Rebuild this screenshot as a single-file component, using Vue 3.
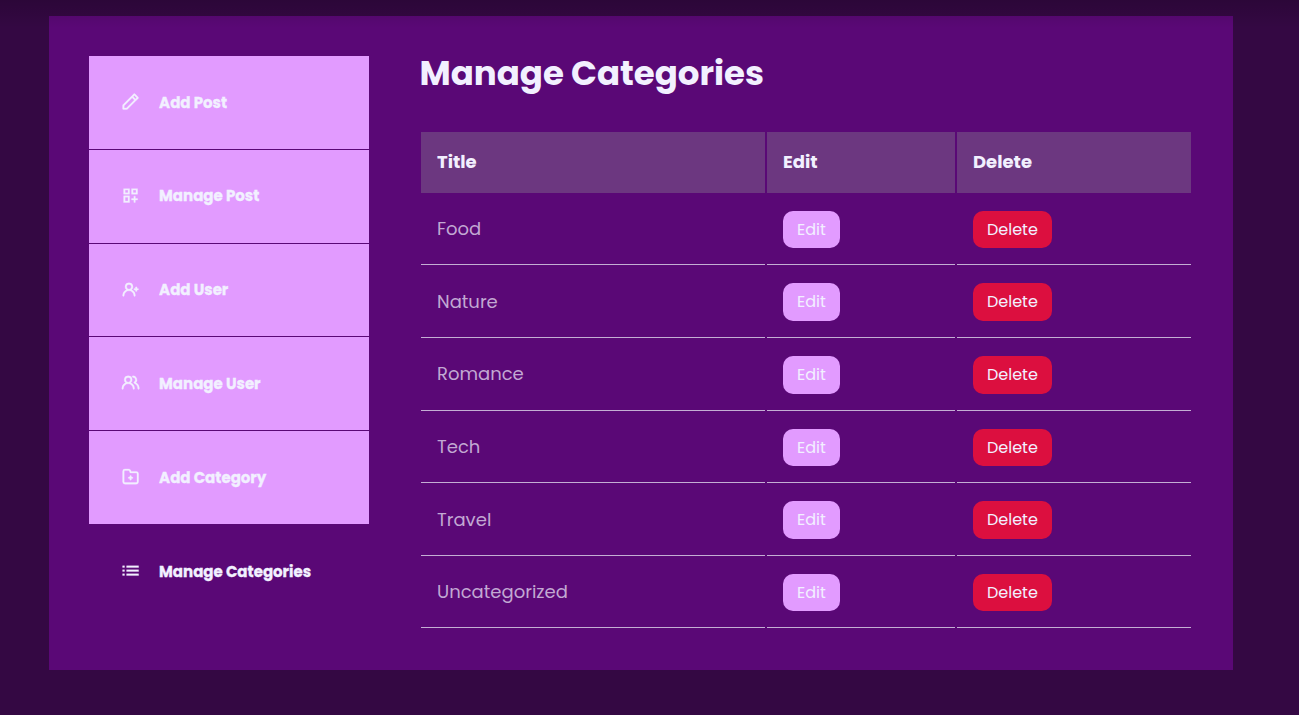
<script setup>
const menu = [
  { label: 'Add Post', icon: 'M22,7.24a1,1,0,0,0-.29-.71L17.47,2.29A1,1,0,0,0,16.76,2a1,1,0,0,0-.71.29L13.22,5.12h0L2.29,16.05a1,1,0,0,0-.29.71V21a1,1,0,0,0,1,1H7.24A1,1,0,0,0,8,21.71L18.87,10.78h0L21.71,8a1.19,1.19,0,0,0,.22-.33,1,1,0,0,0,0-.24.7.7,0,0,0,0-.14ZM6.83,20H4V17.17l9.93-9.93,2.83,2.83ZM18.17,8.66,15.34,5.83l1.42-1.41,2.82,2.82Z' },
  { label: 'Manage Post', icon: 'M3.25 3.3h7.5v7h-7.5zM5.2 5.1v3.4h3.6V5.1zM13.2 3.3h7.5v7h-7.5zM15.1 5.1v3.4h3.7V5.1zM3.25 12.2h7.5v8.5h-7.5zM5.2 14.1v4.7h3.6v-4.7zM16.1 12.7h1.8v3h2.8v1.8h-2.8v3h-1.8v-3h-2.9v-1.8h2.9z' },
  { label: 'Add User', icon: 'M21,10.5H20v-1a1,1,0,0,0-2,0v1H17a1,1,0,0,0,0,2h1v1a1,1,0,0,0,2,0v-1h1a1,1,0,0,0,0-2Zm-7.7,1.72A4.92,4.92,0,0,0,15,8.5a5,5,0,0,0-10,0,4.92,4.92,0,0,0,1.7,3.72A8,8,0,0,0,2,19.5a1,1,0,0,0,2,0,6,6,0,0,1,12,0,1,1,0,0,0,2,0A8,8,0,0,0,13.3,12.22ZM10,11.5a3,3,0,1,1,3-3A3,3,0,0,1,10,11.5Z' },
  { label: 'Manage User', icon: 'M12.3,12.22A4.92,4.92,0,0,0,14,8.5a5,5,0,0,0-10,0,4.92,4.92,0,0,0,1.7,3.72A8,8,0,0,0,1,19.5a1,1,0,0,0,2,0,6,6,0,0,1,12,0,1,1,0,0,0,2,0A8,8,0,0,0,12.3,12.22ZM9,11.5a3,3,0,1,1,3-3A3,3,0,0,1,9,11.5Zm9.74.32A5,5,0,0,0,15,3.5a1,1,0,0,0,0,2,3,3,0,0,1,3,3,3,3,0,0,1-1.5,2.59,1,1,0,0,0-.5.84,1,1,0,0,0,.45.86l.39.26.13.07a7,7,0,0,1,4,6.38,1,1,0,0,0,2,0A9,9,0,0,0,18.74,11.82Z' },
  { label: 'Add Category', icon: 'M14,12.5H13v-1a1,1,0,0,0-2,0v1H10a1,1,0,0,0,0,2h1v1a1,1,0,0,0,2,0v-1h1a1,1,0,0,0,0-2Zm5-7H12.72l-.32-1a3,3,0,0,0-2.84-2H5a3,3,0,0,0-3,3v13a3,3,0,0,0,3,3H19a3,3,0,0,0,3-3V8.5A3,3,0,0,0,19,5.5Zm1,13a1,1,0,0,1-1,1H5a1,1,0,0,1-1-1V5.5a1,1,0,0,1,1-1H9.56a1,1,0,0,1,.95.68l.54,1.64A1,1,0,0,0,12,7.5h7a1,1,0,0,1,1,1Z' },
  { label: 'Manage Categories', active: true, icon: 'M2 6h2.4v2H2zM7 6h15v2.2H7zM2 11h2.4v2H2zM7 11h15v2.2H7zM2 16h2.4v2H2zM7 16h15v2.2H7z' }
]

const columns = ['Title', 'Edit', 'Delete']

const categories = ['Food', 'Nature', 'Romance', 'Tech', 'Travel', 'Uncategorized']
</script>

<template>
  <div class="page">
    <section class="dashboard">
      <aside class="sidebar">
        <a v-for="item in menu" :key="item.label" class="item" :class="{ active: item.active }">
          <svg class="icon" viewBox="0 0 24 24"><path :d="item.icon" fill-rule="evenodd" /></svg>
          <span class="label">{{ item.label }}</span>
        </a>
      </aside>
      <main class="content">
        <h2>Manage Categories</h2>
        <div class="table">
          <div class="row head">
            <div v-for="column in columns" :key="column" class="cell">{{ column }}</div>
          </div>
          <div v-for="category in categories" :key="category" class="row">
            <div class="cell name">{{ category }}</div>
            <div class="cell"><button class="btn">Edit</button></div>
            <div class="cell"><button class="btn danger">Delete</button></div>
          </div>
        </div>
      </main>
    </section>
    <div class="shade"></div>
  </div>
</template>

<style>
body {
  background: #340843;
}
</style>

<style scoped>
.page {
  box-sizing: border-box;
  position: relative;
  height: 715px;
  padding: 16px 66px 0 49px;
  overflow: hidden;
  background: #340843;
  color: #f2f0ff;
  font-family: Poppins, Inter, sans-serif;
}
.shade {
  position: absolute;
  inset: 0 0 auto;
  height: 28px;
  background: linear-gradient(rgba(0, 0, 0, 0.16), transparent);
  pointer-events: none;
}
.dashboard {
  box-sizing: border-box;
  display: grid;
  grid-template-columns: 280px 770px;
  column-gap: 52px;
  height: 654px;
  padding: 40px;
  background: #5a0876;
}
.item {
  box-sizing: border-box;
  display: flex;
  align-items: center;
  gap: 18.9px;
  height: 93.75px;
  padding: 0 32px;
  border-bottom: 1px solid #5a0876;
  background: #e29bff;
  font-size: 15px;
  font-weight: 700;
}
.item.active {
  background: none;
}
.icon {
  width: 19.2px;
  height: 19.2px;
  flex: none;
  margin-top: -1.4px;
  fill: currentColor;
  stroke: currentColor;
  stroke-width: 0.4;
}
.label {
  margin-top: -0.5px;
  white-space: nowrap;
  -webkit-text-stroke: 0.3px currentColor;
}
.active .label {
  margin-top: 0.3px;
}
h2 {
  height: 76px;
  margin: 0 0 0 -1.5px;
  font-size: 34px;
  font-weight: 700;
  line-height: 35px;
  white-space: nowrap;
}
.row {
  display: grid;
  grid-template-columns: 344px 188px 234px;
  column-gap: 2px;
  height: 72.65px;
}
.cell {
  box-sizing: border-box;
  display: flex;
  align-items: center;
  padding: 1px 16px 0;
  border-bottom: 1px solid #c4aed4;
  font-size: 18px;
}
.head {
  height: 60.6px;
}
.head .cell {
  padding: 0 16px 1.6px;
  border: 0;
  background: #6c3780;
  font-weight: 700;
}
.name {
  padding-top: 0.4px;
  color: #c2a8d3;
}
.btn {
  box-sizing: border-box;
  width: 57px;
  height: 37.5px;
  margin-top: 1.2px;
  padding: 0 0 0.8px 14px;
  border: 0;
  border-radius: 10px;
  background: #e29bff;
  color: #f2f0ff;
  font: 400 16px Poppins, Inter, sans-serif;
  text-align: left;
  white-space: nowrap;
}
.danger {
  width: 79px;
  background: #dc0f3f;
}
</style>
